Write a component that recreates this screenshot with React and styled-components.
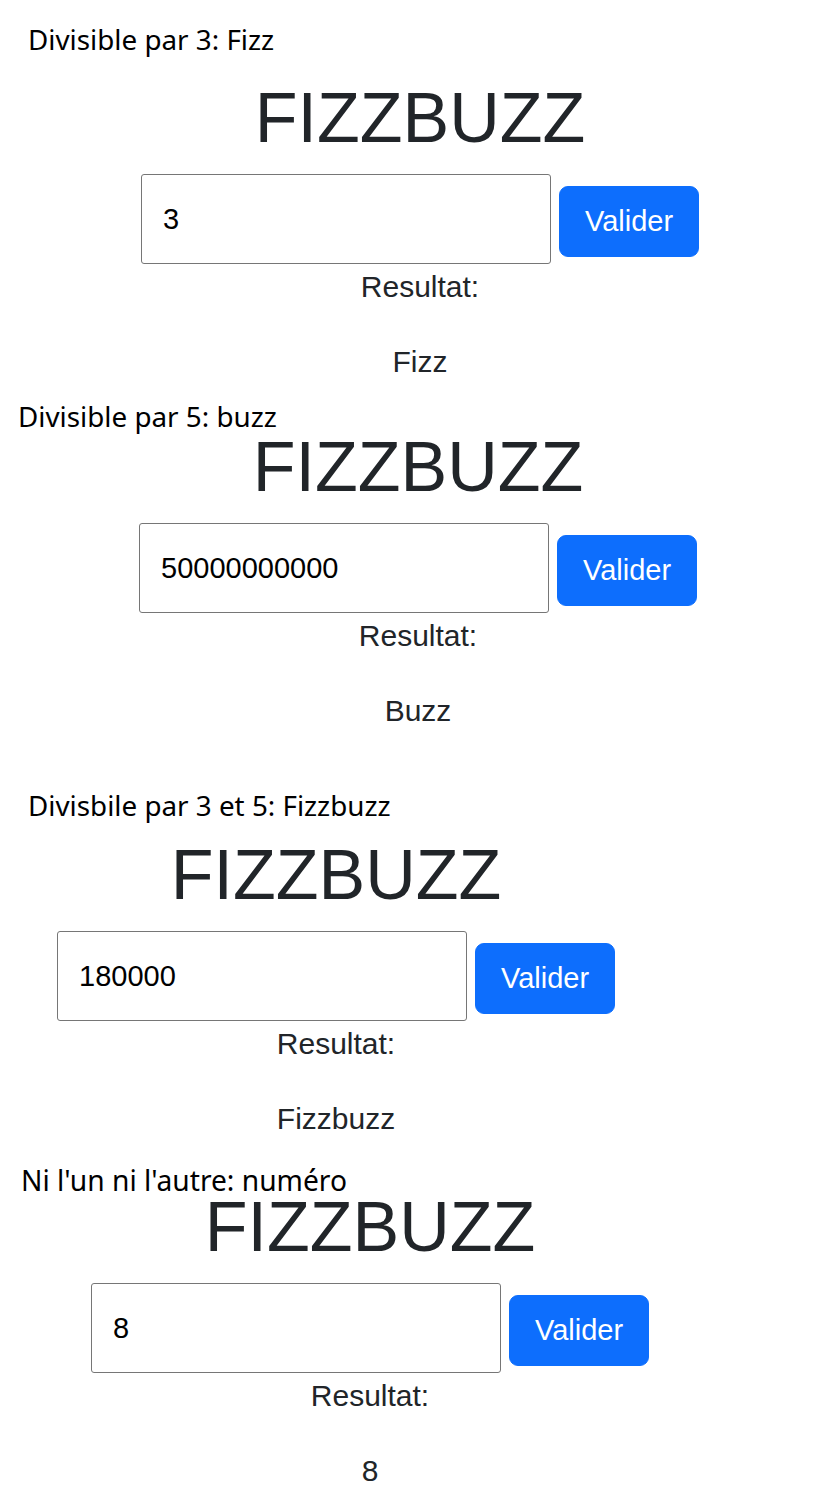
import React from "react";
import styled, { createGlobalStyle } from "styled-components";

const GlobalStyle = createGlobalStyle`
  html, body {
    margin: 0;
    padding: 0;
    background: #ffffff;
  }
  body {
    font-family: "Liberation Sans", Arial, sans-serif;
    color: #212529;
  }
`;

const Page = styled.div`
  width: 822px;
  display: flex;
  flex-direction: column;
`;

const Section = styled.section`
  display: flex;
  flex-direction: column;
  margin-top: ${(p) => p.$top}px;
`;

const Caption = styled.div`
  font-family: "Noto Sans", "Open Sans", sans-serif;
  font-size: ${(p) => p.$size}px;
  line-height: 30px;
  color: #000000;
  padding-left: ${(p) => p.$indent}px;
`;

const Stack = styled.div`
  width: 558px;
  margin-left: ${(p) => p.$left}px;
  display: flex;
  flex-direction: column;
  align-items: center;
`;

const Title = styled.h1`
  margin: ${(p) => p.$gap}px 0 0 0;
  font-family: "Liberation Sans", Arial, sans-serif;
  font-weight: 400;
  font-size: 70px;
  line-height: 60px;
  color: #212529;
`;

const Row = styled.div`
  margin-top: 26px;
  width: 100%;
  display: flex;
  align-items: flex-start;
`;

const Field = styled.input`
  box-sizing: border-box;
  width: 410px;
  height: 90px;
  border: 1px solid #767676;
  border-radius: 3px;
  padding: 0 0 0 21px;
  font-family: "Liberation Sans", Arial, sans-serif;
  font-size: 29px;
  color: #000000;
  background: #ffffff;
  outline: none;
`;

const Button = styled.button`
  box-sizing: border-box;
  margin: 12px 0 0 8px;
  width: 140px;
  height: 71px;
  border: 1px solid #0d6efd;
  border-radius: 9px;
  background: #0d6efd;
  color: #ffffff;
  font-family: "Liberation Sans", Arial, sans-serif;
  font-size: 29px;
  padding: 0;
  cursor: pointer;
`;

const Label = styled.div`
  font-size: 30px;
  line-height: 45px;
  color: #212529;
`;

const Result = styled.div`
  margin-top: 30px;
  font-size: 30px;
  line-height: 45px;
  color: #212529;
`;

const sections = [
  { caption: "Divisible par 3: Fizz", size: 27.8, indent: 28, top: 24, gap: 34, left: 141, value: "3", result: "Fizz" },
  { caption: "Divisible par 5: buzz", size: 27.8, indent: 18, top: 17, gap: 6, left: 139, value: "50000000000", result: "Buzz" },
  { caption: "Divisbile par 3 et 5: Fizzbuzz", size: 27.8, indent: 28, top: 57, gap: 25, left: 57, value: "180000", result: "Fizzbuzz" },
  { caption: "Ni l'un ni l'autre: numéro", size: 28.2, indent: 21, top: 24, gap: 2, left: 91, value: "8", result: "8" },
];

export default function App() {
  return (
    <>
      <GlobalStyle />
      <Page>
        {sections.map((s) => (
          <Section key={s.caption} $top={s.top}>
            <Caption $indent={s.indent} $size={s.size}>{s.caption}</Caption>
            <Stack $left={s.left}>
              <Title $gap={s.gap}>FIZZBUZZ</Title>
              <Row>
                <Field type="text" defaultValue={s.value} />
                <Button type="button">Valider</Button>
              </Row>
              <Label>Resultat:</Label>
              <Result>{s.result}</Result>
            </Stack>
          </Section>
        ))}
      </Page>
    </>
  );
}
